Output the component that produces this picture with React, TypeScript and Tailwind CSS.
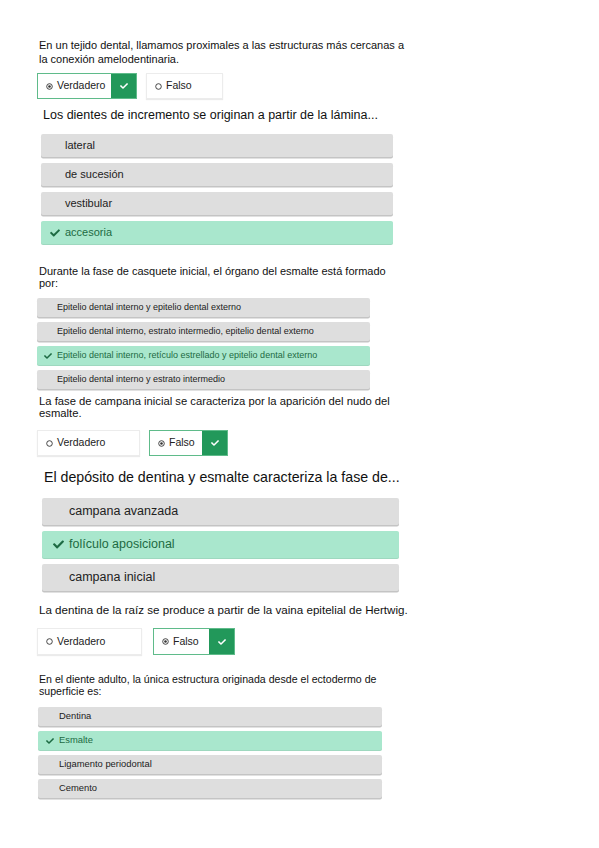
import React from "react";
import { FaCheck } from "react-icons/fa";

type Opt = { label: string; correct?: boolean };

const font = { fontFamily: '"Liberation Sans", Arial, sans-serif' };

const Radio = ({ on, size }: { on: boolean; size: number }) => (
  <svg width={size} height={size} viewBox="0 0 10 10" className="shrink-0">
    <circle cx="5" cy="5" r="4" fill="none" stroke="#333" strokeWidth="1.3" />
    {on && <circle cx="5" cy="5" r="1.8" fill="#333" />}
  </svg>
);

const TrueFalse = ({
  answer,
  vWidth,
  fWidth,
  gap,
  h,
}: {
  answer: "v" | "f";
  vWidth: number;
  fWidth: number;
  gap: number;
  h: number;
}) => {
  const btn = (label: string, on: boolean, w: number) => (
    <div
      className={
        "flex items-stretch bg-white text-[10.5px] text-[#222] " +
        (on ? "border border-[#5fbb8a]" : "border border-[#ececec] shadow-[0_1px_1px_rgba(0,0,0,0.08)]")
      }
      style={{ width: w, height: h }}
    >
      <div className="flex flex-1 items-center gap-[4px] pl-[8px]">
        <Radio on={on} size={7} />
        <span>{label}</span>
      </div>
      {on && (
        <div className="flex w-[25px] items-center justify-center bg-[#22985a] text-white">
          <FaCheck size={8} />
        </div>
      )}
    </div>
  );
  return (
    <div className="flex" style={{ gap }}>
      {btn("Verdadero", answer === "v", vWidth)}
      {btn("Falso", answer === "f", fWidth)}
    </div>
  );
};

const Options = ({
  items,
  width,
  h,
  gap,
  pl,
  text,
  check,
}: {
  items: Opt[];
  width: number;
  h: number;
  gap: number;
  pl: number;
  text: string;
  check: number;
}) => (
  <div className="flex flex-col" style={{ width, gap }}>
    {items.map((o) => (
      <div
        key={o.label}
        className={
          "relative flex items-center rounded-[2px] " +
          text +
          (o.correct
            ? " bg-[#a9e7cd] text-[#1d6b43] shadow-[0_1px_0_#9ed8bf]"
            : " bg-[#dedede] text-[#222] shadow-[0_1.5px_0_#c4c4c4]")
        }
        style={{ height: h, paddingLeft: pl }}
      >
        {o.correct && (
          <span className="absolute text-[#1d6b43]" style={{ left: pl - check - 5 }}>
            <FaCheck size={check} />
          </span>
        )}
        {o.label}
      </div>
    ))}
  </div>
);

export default function App() {
  return (
    <div className="min-h-[848px] w-[599px] bg-white pt-[38px] pl-[37px]" style={font}>
      {/* 1 */}
      <p className="ml-[2px] w-[372px] text-[11px] leading-[14px] text-[#111]">
        En un tejido dental, llamamos proximales a las estructuras más cercanas a la conexión amelodentinaria.
      </p>
      <div className="mt-[7px]">
        <TrueFalse answer="v" vWidth={100} fWidth={77} gap={9} h={26} />
      </div>

      {/* 2 */}
      <p className="mt-[8px] ml-[6px] text-[12.5px] leading-[16px] text-[#111]">
        Los dientes de incremento se originan a partir de la lámina...
      </p>
      <div className="mt-[11px] ml-[4px]">
        <Options
          width={352}
          h={23}
          gap={6}
          pl={24}
          text="text-[11px]"
          check={10}
          items={[
            { label: "lateral" },
            { label: "de sucesión" },
            { label: "vestibular" },
            { label: "accesoria", correct: true },
          ]}
        />
      </div>

      {/* 3 */}
      <p className="mt-[21px] ml-[2px] w-[360px] text-[11px] leading-[12px] text-[#111]">
        Durante la fase de casquete inicial, el órgano del esmalte está formado por:
      </p>
      <div className="mt-[9px]">
        <Options
          width={333}
          h={19}
          gap={5}
          pl={20}
          text="text-[9px]"
          check={8}
          items={[
            { label: "Epitelio dental interno y epitelio dental externo" },
            { label: "Epitelio dental interno, estrato intermedio, epitelio dental externo" },
            { label: "Epitelio dental interno, retículo estrellado y epitelio dental externo", correct: true },
            { label: "Epitelio dental interno y estrato intermedio" },
          ]}
        />
      </div>

      {/* 4 */}
      <p className="mt-[6px] ml-[2px] w-[360px] text-[11.25px] leading-[12px] font-medium text-[#111]">
        La fase de campana inicial se caracteriza por la aparición del nudo del esmalte.
      </p>
      <div className="mt-[11px]">
        <TrueFalse answer="f" vWidth={103} fWidth={79} gap={9} h={26} />
      </div>

      {/* 5 */}
      <p className="mt-[12px] ml-[7px] text-[14.2px] leading-[18px] text-[#111]">
        El depósito de dentina y esmalte caracteriza la fase de...
      </p>
      <div className="mt-[12px] ml-[5px]">
        <Options
          width={357}
          h={27}
          gap={6}
          pl={27}
          text="text-[12.5px]"
          check={11}
          items={[
            { label: "campana avanzada" },
            { label: "folículo aposicional", correct: true },
            { label: "campana inicial" },
          ]}
        />
      </div>

      {/* 6 */}
      <p className="mt-[12px] ml-[2px] text-[11.6px] leading-[14px] text-[#111]">
        La dentina de la raíz se produce a partir de la vaina epitelial de Hertwig.
      </p>
      <div className="mt-[11px]">
        <TrueFalse answer="f" vWidth={105} fWidth={82} gap={11} h={27} />
      </div>

      {/* 7 */}
      <p className="mt-[18px] ml-[2px] w-[350px] text-[10.6px] leading-[12px] text-[#111]">
        En el diente adulto, la única estructura originada desde el ectodermo de superficie es:
      </p>
      <div className="mt-[10px] ml-[1px]">
        <Options
          width={344}
          h={19}
          gap={5}
          pl={21}
          text="text-[9.4px]"
          check={8}
          items={[
            { label: "Dentina" },
            { label: "Esmalte", correct: true },
            { label: "Ligamento periodontal" },
            { label: "Cemento" },
          ]}
        />
      </div>
    </div>
  );
}
